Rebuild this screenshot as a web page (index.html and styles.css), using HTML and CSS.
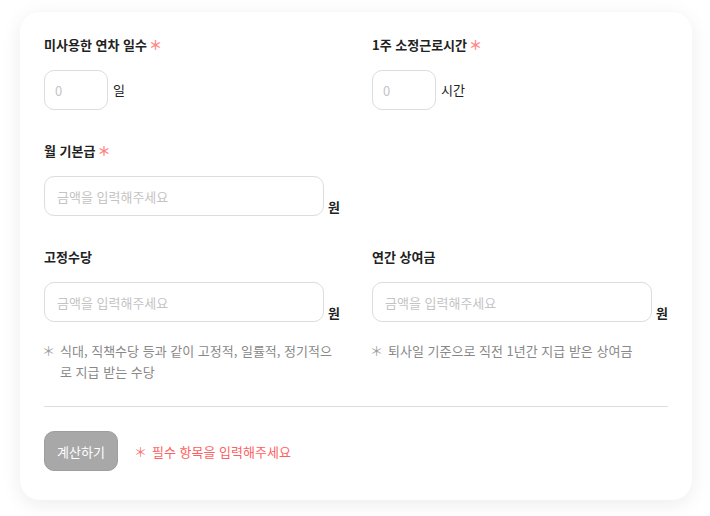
FILE: index.html
```html
<!DOCTYPE html>
<html lang="ko">
<head>
<meta charset="utf-8">
<link rel="stylesheet" href="styles.css">
</head>
<body>
<div class="card">
  <div class="grid">
    <div class="field">
      <div class="label">미사용한 연차 일수<span class="req">＊</span></div>
      <div class="row">
        <input class="input small" placeholder="0">
        <span class="unit">일</span>
      </div>
    </div>
    <div class="field">
      <div class="label">1주 소정근로시간<span class="req">＊</span></div>
      <div class="row">
        <input class="input small" placeholder="0">
        <span class="unit">시간</span>
      </div>
    </div>
    <div class="field">
      <div class="label">월 기본급<span class="req">＊</span></div>
      <div class="row bottom">
        <input class="input wide" placeholder="금액을 입력해주세요">
        <span class="unit bold">원</span>
      </div>
    </div>
    <div class="field empty"></div>
    <div class="field">
      <div class="label">고정수당</div>
      <div class="row bottom">
        <input class="input wide" placeholder="금액을 입력해주세요">
        <span class="unit bold">원</span>
      </div>
      <div class="help"><span class="star">＊</span><span>식대, 직책수당 등과 같이 고정적, 일률적, 정기적으로 지급 받는 수당</span></div>
    </div>
    <div class="field">
      <div class="label">연간 상여금</div>
      <div class="row bottom">
        <input class="input wide" placeholder="금액을 입력해주세요">
        <span class="unit bold">원</span>
      </div>
      <div class="help"><span class="star">＊</span><span>퇴사일 기준으로 직전 1년간 지급 받은 상여금</span></div>
    </div>
  </div>
  <hr class="divider">
  <div class="actions">
    <button class="btn">계산하기</button>
    <span class="error"><span class="estar">＊</span>필수 항목을 입력해주세요</span>
  </div>
</div>
</body>
</html>
```
FILE: styles.css
```css
* { box-sizing: border-box; }
html, body { margin: 0; padding: 0; background: #ffffff; }
body {
  font-family: "Noto Sans CJK KR", "Noto Sans", sans-serif;
  font-size: 13px;
  color: #222;
  padding: 12px 18px 16px 20px;
}
.card {
  width: 672px;
  background: #fff;
  border-radius: 20px;
  box-shadow: 0 4px 20px rgba(0, 0, 0, 0.08);
  padding: 24px 24px 29px 24px;
}
.grid {
  display: grid;
  grid-template-columns: 296px 296px;
  column-gap: 32px;
  row-gap: 32px;
}
.label {
  font-weight: 700;
  font-size: 13px;
  line-height: 18px;
  height: 18px;
  margin-bottom: 16px;
  color: #222;
}
.req { color: #ff8585; font-weight: 700; margin-left: 2px; }
.row { display: flex; align-items: center; gap: 5px; }
.row.bottom { align-items: flex-end; gap: 4px; }
.input {
  height: 40px;
  border: 1px solid #dddddd;
  border-radius: 10px;
  background: #fff;
  font-family: inherit;
  font-size: 13px;
  padding: 0 10px;
  color: #222;
  outline: none;
}
.input::placeholder { color: #c4c4c4; }
.input.small { width: 64px; }
.input.wide { width: 280px; padding: 0 12px; }
.unit { font-size: 13px; color: #222; line-height: 18px; }
.unit.bold { font-weight: 700; }
.help {
  display: flex;
  gap: 5px;
  margin-top: 18px;
  font-size: 13px;
  line-height: 21px;
  color: #888;
}
.star { color: #a0a0a0; flex: none; margin-left: -2px; }
.divider {
  border: 0;
  border-top: 1px solid #dddddd;
  margin: 24px 0 24px 0;
}
.actions { display: flex; align-items: center; gap: 16px; }
.btn {
  width: 74px;
  height: 40px;
  background: #a8a8a8;
  border: 1px solid #9e9e9e;
  border-radius: 10px;
  color: #fff;
  font-family: inherit;
  font-size: 13px;
  padding: 0;
}
.error { color: #ff5f5f; font-size: 13px; }
.estar { color: #ff7070; margin-right: 5px; }
```
